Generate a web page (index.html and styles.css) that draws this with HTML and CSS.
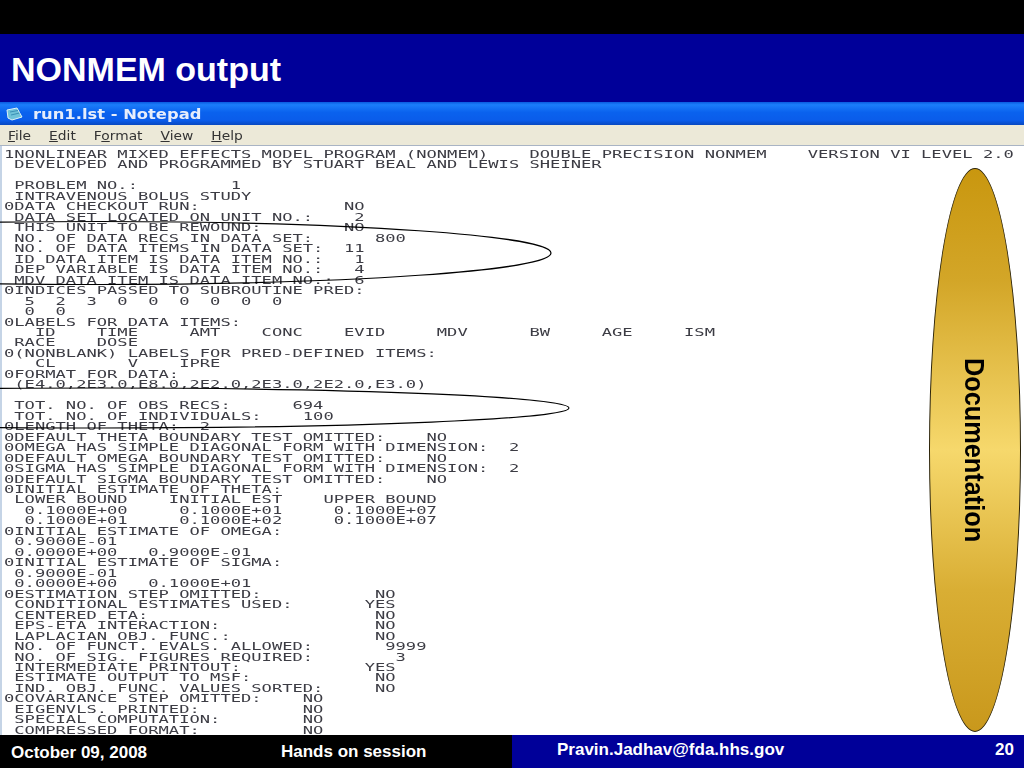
FILE: index.html
```html
<!DOCTYPE html>
<html lang="en">
<head>
<meta charset="utf-8">
<title>NONMEM output</title>
<link rel="stylesheet" href="styles.css">
</head>
<body>
<div class="slide">
  <div class="topband"></div>
  <header class="heading"><h1>NONMEM output</h1></header>
  <main class="window">
    <div class="titlebar">
      <svg class="appicon" viewBox="0 0 18 16" width="18" height="16" aria-hidden="true">
        <path d="M2 4 L12 2 L17 11 L7 14 L3 12 Z" fill="#6fc2d8" stroke="#dff2f6" stroke-width="1"/>
        <path d="M5 6 L13 4.5 M6 9 L14.5 7" stroke="#3b8fb5" stroke-width="1"/>
      </svg>
      <span class="apptitle">run1.lst - Notepad</span>
    </div>
    <nav class="menubar">
      <div class="menuitems">
        <span><u>F</u>ile</span>
        <span><u>E</u>dit</span>
        <span>F<u>o</u>rmat</span>
        <span><u>V</u>iew</span>
        <span><u>H</u>elp</span>
      </div>
    </nav>
    <div class="document">
<pre class="listing">1NONLINEAR MIXED EFFECTS MODEL PROGRAM (NONMEM)    DOUBLE PRECISION NONMEM    VERSION VI LEVEL 2.0
 DEVELOPED AND PROGRAMMED BY STUART BEAL AND LEWIS SHEINER

 PROBLEM NO.:         1
 INTRAVENOUS BOLUS STUDY
0DATA CHECKOUT RUN:              NO
 DATA SET LOCATED ON UNIT NO.:    2
 THIS UNIT TO BE REWOUND:        NO
 NO. OF DATA RECS IN DATA SET:      800
 NO. OF DATA ITEMS IN DATA SET:  11
 ID DATA ITEM IS DATA ITEM NO.:   1
 DEP VARIABLE IS DATA ITEM NO.:   4
 MDV DATA ITEM IS DATA ITEM NO.:  6
0INDICES PASSED TO SUBROUTINE PRED:
  5  2  3  0  0  0  0  0  0
  0  0
0LABELS FOR DATA ITEMS:
   ID    TIME     AMT    CONC    EVID     MDV      BW     AGE     ISM
 RACE    DOSE
0(NONBLANK) LABELS FOR PRED-DEFINED ITEMS:
   CL       V    IPRE
0FORMAT FOR DATA:
 (E4.0,2E3.0,E8.0,2E2.0,2E3.0,2E2.0,E3.0)

 TOT. NO. OF OBS RECS:      694
 TOT. NO. OF INDIVIDUALS:    100
0LENGTH OF THETA:  2
0DEFAULT THETA BOUNDARY TEST OMITTED:    NO
0OMEGA HAS SIMPLE DIAGONAL FORM WITH DIMENSION:  2
0DEFAULT OMEGA BOUNDARY TEST OMITTED:    NO
0SIGMA HAS SIMPLE DIAGONAL FORM WITH DIMENSION:  2
0DEFAULT SIGMA BOUNDARY TEST OMITTED:    NO
0INITIAL ESTIMATE OF THETA:
 LOWER BOUND    INITIAL EST    UPPER BOUND
  0.1000E+00     0.1000E+01     0.1000E+07
  0.1000E+01     0.1000E+02     0.1000E+07
0INITIAL ESTIMATE OF OMEGA:
 0.9000E-01
 0.0000E+00   0.9000E-01
0INITIAL ESTIMATE OF SIGMA:
 0.9000E-01
 0.0000E+00   0.1000E+01
0ESTIMATION STEP OMITTED:           NO
 CONDITIONAL ESTIMATES USED:       YES
 CENTERED ETA:                      NO
 EPS-ETA INTERACTION:               NO
 LAPLACIAN OBJ. FUNC.:              NO
 NO. OF FUNCT. EVALS. ALLOWED:       9999
 NO. OF SIG. FIGURES REQUIRED:        3
 INTERMEDIATE PRINTOUT:            YES
 ESTIMATE OUTPUT TO MSF:            NO
 IND. OBJ. FUNC. VALUES SORTED:     NO
0COVARIANCE STEP OMITTED:    NO
 EIGENVLS. PRINTED:          NO
 SPECIAL COMPUTATION:        NO
 COMPRESSED FORMAT:          NO</pre>
    </div>
    <svg class="callouts" viewBox="0 0 1024 633" aria-hidden="true">
      <ellipse cx="100" cy="151" rx="451" ry="31.5"/>
      <ellipse cx="100" cy="306" rx="469" ry="20"/>
    </svg>
    <aside class="oval"><span>Documentation</span></aside>
  </main>
  <footer class="footer">
    <div class="foot-left">
      <span class="date">October 09, 2008</span>
      <span class="session">Hands on session</span>
    </div>
    <div class="foot-right">
      <span class="email">Pravin.Jadhav@fda.hhs.gov</span>
      <span class="page">20</span>
    </div>
  </footer>
</div>
</body>
</html>
```

FILE: styles.css
```css
html, body {
  margin: 0;
  padding: 0;
  background: #000;
}
.slide {
  width: 1024px;
  height: 768px;
  display: flex;
  flex-direction: column;
  overflow: hidden;
  font-family: "Liberation Sans", Arial, sans-serif;
}
.topband {
  height: 34px;
  background: #000;
  flex: none;
}
.heading {
  height: 68px;
  flex: none;
  background: #000099;
  display: flex;
  align-items: center;
  padding-left: 11px;
  box-sizing: border-box;
}
.heading h1 {
  margin: 0;
  color: #fff;
  font-size: 34px;
  font-weight: 700;
  line-height: 1;
  padding-top: 1px;
}
.window {
  position: relative;
  height: 633px;
  flex: none;
  background: #fff;
  display: flex;
  flex-direction: column;
  overflow: hidden;
}
.titlebar {
  height: 23px;
  flex: none;
  display: flex;
  align-items: center;
  gap: 10px;
  padding-left: 5px;
  background: linear-gradient(to bottom, #0a5ae0 0, #1b7dfa 12%, #0a62ee 45%, #0a5cea 80%, #0848c0 100%);
}
.apptitle {
  color: #e6edfb;
  font-family: "DejaVu Sans", sans-serif;
  font-size: 13.5px;
  font-weight: 700;
  line-height: 1;
  padding-top: 3px;
  transform: scaleX(1.21);
  transform-origin: left center;
}
.menubar {
  height: 21px;
  flex: none;
  display: flex;
  align-items: center;
  padding: 1px 0 0 8px;
  background: #ece9d8;
  border-bottom: 1px solid #a9b4c4;
  box-sizing: border-box;
  color: #333;
  font-family: "DejaVu Sans", sans-serif;
  font-size: 11.5px;
}
.menuitems {
  display: flex;
  gap: 15px;
  transform: scaleX(1.2);
  transform-origin: left center;
}
.document {
  flex: 1;
  min-height: 0;
  padding: 3px 0 0 4px;
  border-left: 2px solid #c5d4e6;
  box-sizing: border-box;
}
.listing {
  margin: 0 0 0 -2px;
  font-family: "DejaVu Sans Mono", monospace;
  font-size: 10.5px;
  line-height: 10.47px;
  color: #3c3c44;
  transform: scaleX(1.63);
  transform-origin: left top;
  filter: blur(0.3px);
}
.callouts {
  position: absolute;
  left: 0;
  top: 0;
  width: 1024px;
  height: 633px;
  fill: none;
  stroke: #000;
  stroke-width: 1.2;
}
.oval {
  position: absolute;
  left: 929px;
  top: 66px;
  width: 92px;
  height: 564px;
  box-sizing: border-box;
  border: 1px solid #2c2308;
  border-radius: 50%;
  background: linear-gradient(to bottom, #c9970f 0%, #d3a628 20%, #f6d86c 50%, #d9ae34 75%, #c9981c 100%);
  display: flex;
  align-items: center;
  justify-content: center;
}
.oval span {
  writing-mode: vertical-rl;
  color: #000;
  font-size: 25.3px;
  font-weight: 700;
  line-height: 1;
  transform: scaleX(1.1);
}
.footer {
  height: 33px;
  flex: none;
  display: grid;
  grid-template-columns: 512px 512px;
  color: #fff;
  font-weight: 700;
}
.foot-left {
  background: #000;
  display: flex;
  padding-left: 11px;
}
.foot-right {
  background: #000099;
  display: flex;
  justify-content: space-between;
  padding: 0 10px 0 45px;
}
.date {
  font-size: 17px;
  line-height: 36px;
  width: 270px;
}
.session {
  font-size: 17px;
  line-height: 33px;
}
.email {
  font-size: 17px;
  line-height: 30px;
}
.page {
  font-size: 17px;
  line-height: 30px;
}
```
